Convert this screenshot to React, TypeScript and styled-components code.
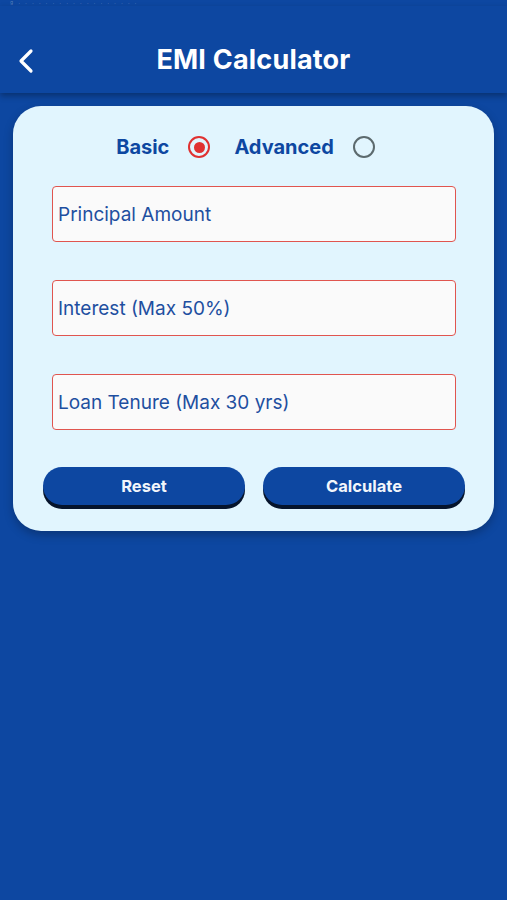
import * as React from 'react';
import styled, { createGlobalStyle } from 'styled-components';

const GlobalStyle = createGlobalStyle`
    html, body {
        margin: 0;
        padding: 0;
        background: #0d47a1;
        font-family: Inter, "Noto Sans", "Liberation Sans", sans-serif;
    }
`;

const Screen = styled.div`
    width: 507px;
    height: 900px;
    background: #0d47a1;
    overflow: hidden;
    display: flex;
    flex-direction: column;
`;

const StatusBar = styled.div`
    height: 6px;
    padding-left: 10px;
    font-size: 5px;
    line-height: 5px;
    letter-spacing: 2px;
    color: rgba(255, 255, 255, 0.3);
`;

const Header = styled.header`
    height: 87px;
    display: flex;
    align-items: center;
    justify-content: center;
    position: relative;
    background: #0d47a1;
    box-shadow: 0 3px 6px rgba(0, 0, 0, 0.3);
    box-sizing: border-box;
    padding-top: 20px;
    z-index: 1;
`;

const BackButton = styled.button`
    position: absolute;
    left: 15px;
    top: 41px;
    width: 22px;
    height: 28px;
    padding: 0;
    border: none;
    background: transparent;
    display: flex;
    align-items: center;
    justify-content: center;
`;

const Title = styled.h1`
    margin: 0;
    color: #ffffff;
    font-size: 27px;
    font-weight: 700;
    letter-spacing: 0.2px;
`;

const Card = styled.section`
    margin: 13px 13px 0;
    background: #e1f5fe;
    border-radius: 28px;
    padding: 29px 29px 22px 30px;
    box-shadow: 0 4px 10px rgba(0, 0, 0, 0.25);
    display: flex;
    flex-direction: column;
`;

const RadioRow = styled.div`
    display: flex;
    align-items: center;
    justify-content: center;
    height: 24px;
    padding-right: 17px;
`;

const RadioLabel = styled.span`
    color: #0d47a1;
    font-size: 20px;
    font-weight: 700;
    margin-right: 19px;
`;

const RadioCircle = styled.span<{ checked?: boolean }>`
    width: 22px;
    height: 22px;
    box-sizing: border-box;
    border-radius: 50%;
    border: 2.5px solid ${(p) => (p.checked ? '#e03131' : '#5c6a6e')};
    display: flex;
    align-items: center;
    justify-content: center;
    margin-right: ${(p) => (p.checked ? '24px' : '0')};

    &::after {
        content: '';
        display: ${(p) => (p.checked ? 'block' : 'none')};
        width: 11px;
        height: 11px;
        border-radius: 50%;
        background: #e03131;
    }
`;

const Fields = styled.div`
    display: flex;
    flex-direction: column;
    gap: 38px;
    margin: 27px 9px 0;
`;

const Field = styled.div`
    height: 56px;
    box-sizing: border-box;
    border: 1.5px solid #e0554f;
    border-radius: 4px;
    background: #fafafa;
    display: flex;
    align-items: center;
    padding-left: 5px;
    color: #1e4fa0;
    font-size: 19px;
    font-weight: 400;
`;

const ButtonRow = styled.div`
    display: grid;
    grid-template-columns: 1fr 1fr;
    gap: 18px;
    margin-top: 37px;
`;

const ActionButton = styled.button`
    height: 38px;
    border: none;
    border-radius: 19px;
    background: #0d47a1;
    color: #f2f6fb;
    font-family: inherit;
    font-size: 16.5px;
    font-weight: 700;
    box-shadow: 0 4px 0 #05142c;
    margin-bottom: 4px;
`;

const fields = ['Principal Amount', 'Interest (Max 50%)', 'Loan Tenure (Max 30 yrs)'];

export default function App(): JSX.Element {
    return (
        <Screen>
            <GlobalStyle />
            <StatusBar>g . . . . . . . . . . . . . . . . . .</StatusBar>
            <Header>
                <BackButton aria-label="Back">
                    <svg width="18" height="26" viewBox="0 0 18 26">
                        <path d="M14 3 L4 13 L14 23" fill="none" stroke="#ffffff" strokeWidth="3.2" strokeLinecap="round" strokeLinejoin="round" />
                    </svg>
                </BackButton>
                <Title>EMI Calculator</Title>
            </Header>
            <Card>
                <RadioRow>
                    <RadioLabel>Basic</RadioLabel>
                    <RadioCircle checked />
                    <RadioLabel>Advanced</RadioLabel>
                    <RadioCircle />
                </RadioRow>
                <Fields>
                    {fields.map((f) => (
                        <Field key={f}>{f}</Field>
                    ))}
                </Fields>
                <ButtonRow>
                    <ActionButton>Reset</ActionButton>
                    <ActionButton>Calculate</ActionButton>
                </ButtonRow>
            </Card>
        </Screen>
    );
}
